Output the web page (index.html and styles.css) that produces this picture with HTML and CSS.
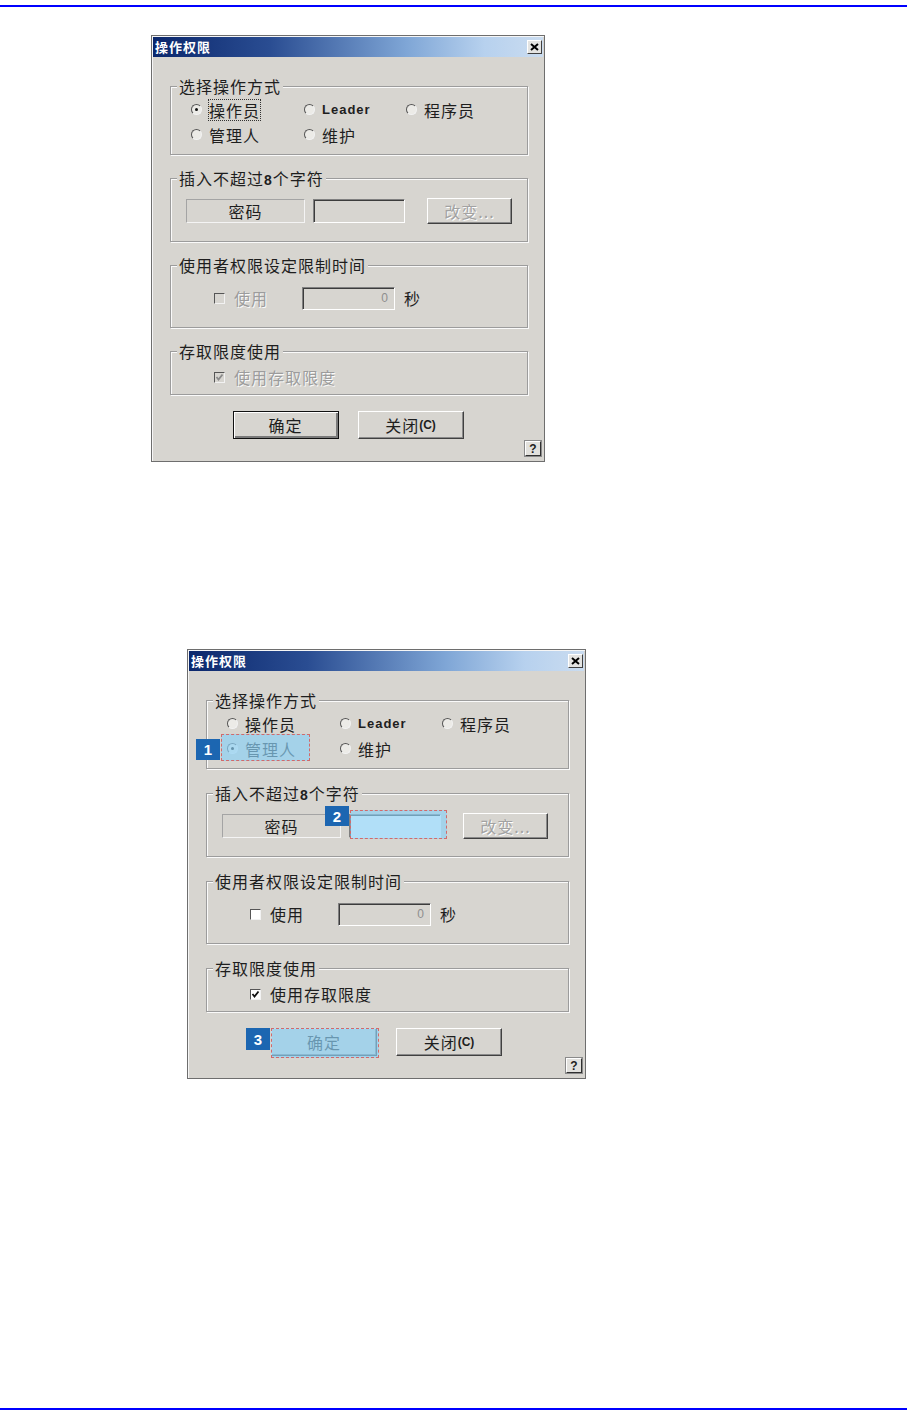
FILE: index.html
```html
<!DOCTYPE html>
<html lang="zh-CN">
<head>
  <meta charset="UTF-8">
  <meta name="viewport" content="width=device-width, initial-scale=1.0">
  <title>操作权限</title>
  <link rel="stylesheet" href="styles.css">
</head>
<body>
  <div class="rule"></div>

  <!-- plain dialog -->
  <div class="dialog">
    <div class="titlebar">
      <span class="title">操作权限</span>
      <span class="close"><svg width="9" height="8" viewBox="0 0 9 8"><path d="M1 1 L8 7 M8 1 L1 7" stroke="#000" stroke-width="2"/></svg></span>
    </div>
    <div class="dialog-body">
      <div class="groups">
        <fieldset class="group">
          <legend>选择操作方式</legend>
          <div class="radio-grid">
            <div class="opt checked"><span class="radio"></span><span class="focus">操作员</span></div>
            <div class="opt"><span class="radio"></span><span class="latin">Leader</span></div>
            <div class="opt"><span class="radio"></span>程序员</div>
            <div class="opt"><span class="radio"></span>管理人</div>
            <div class="opt"><span class="radio"></span>维护</div>
          </div>
        </fieldset>

        <fieldset class="group">
          <legend>插入不超过<b class="num">8</b>个字符</legend>
          <div class="row row-pass">
            <div class="static">密码</div>
            <div class="field field-pass"></div>
            <div class="btn btn-change disabled">改变...</div>
          </div>
        </fieldset>

        <fieldset class="group">
          <legend>使用者权限设定限制时间</legend>
          <div class="row row-time">
            <div class="check-opt disabled"><span class="box"></span>使用</div>
            <div class="field field-num">0</div>
            <span class="unit">秒</span>
          </div>
        </fieldset>

        <fieldset class="group">
          <legend>存取限度使用</legend>
          <div class="row row-limit">
            <div class="check-opt disabled"><span class="box"><svg width="9" height="9" viewBox="0 0 9 9"><path d="M1.5 4 L3.5 6.5 L7.5 1.5" fill="none" stroke="currentColor" stroke-width="1.8"/></svg></span>使用存取限度</div>
          </div>
        </fieldset>
      </div>

      <div class="actions">
        <div class="btn btn-default">确定</div>
        <div class="btn">关闭<b class="key">(C)</b></div>
      </div>
      <div class="help-row"><span class="help">?</span></div>
    </div>
  </div>

  <!-- same dialog with the numbered steps -->
  <div class="dialog dialog-steps">
    <div class="titlebar">
      <span class="title">操作权限</span>
      <span class="close"><svg width="9" height="8" viewBox="0 0 9 8"><path d="M1 1 L8 7 M8 1 L1 7" stroke="#000" stroke-width="2"/></svg></span>
    </div>
    <div class="dialog-body">
      <div class="groups">
        <fieldset class="group">
          <legend>选择操作方式</legend>
          <div class="radio-grid">
            <div class="opt"><span class="radio"></span>操作员</div>
            <div class="opt"><span class="radio"></span><span class="latin">Leader</span></div>
            <div class="opt"><span class="radio"></span>程序员</div>
            <div class="opt checked">
              <span class="radio"></span>管理人
              <span class="mark mark-1"></span>
              <span class="badge badge-1">1</span>
            </div>
            <div class="opt"><span class="radio"></span>维护</div>
          </div>
        </fieldset>

        <fieldset class="group">
          <legend>插入不超过<b class="num">8</b>个字符</legend>
          <div class="row row-pass">
            <div class="static">密码</div>
            <div class="field field-pass field-on">
              <span class="mark mark-2"></span>
              <span class="badge badge-2">2</span>
            </div>
            <div class="btn btn-change disabled">改变...</div>
          </div>
        </fieldset>

        <fieldset class="group">
          <legend>使用者权限设定限制时间</legend>
          <div class="row row-time">
            <div class="check-opt"><span class="box"></span>使用</div>
            <div class="field field-num">0</div>
            <span class="unit">秒</span>
          </div>
        </fieldset>

        <fieldset class="group">
          <legend>存取限度使用</legend>
          <div class="row row-limit">
            <div class="check-opt"><span class="box"><svg width="9" height="9" viewBox="0 0 9 9"><path d="M1.5 4 L3.5 6.5 L7.5 1.5" fill="none" stroke="currentColor" stroke-width="1.8"/></svg></span>使用存取限度</div>
          </div>
        </fieldset>
      </div>

      <div class="actions">
        <div class="btn">
          确定
          <span class="mark mark-3"></span>
          <span class="badge badge-3">3</span>
        </div>
        <div class="btn">关闭<b class="key">(C)</b></div>
      </div>
      <div class="help-row"><span class="help">?</span></div>
    </div>
  </div>

  <div class="rule rule-bottom"></div>
</body>
</html>
```

FILE: styles.css
```css
body {
  margin: 0;
  background: #fff;
  font-family: "Noto Sans CJK SC", "Liberation Sans", sans-serif;
  color: #1e1e1e;
}
.rule {
  height: 2px;
  margin-top: 5px;
  background: #0000ff;
}
.rule-bottom {
  margin-top: 329px;
}

/* dialog frame */
.dialog {
  width: 394px;
  margin: 28px 0 0 151px;
  box-sizing: border-box;
  border: 1px solid #6e6e6e;
  padding: 1px;
  background: #d7d5d0;
  box-shadow: inset 1px 1px 0 #f6f6f6;
}
.dialog-steps {
  width: 399px;
  margin: 187px 0 0 187px;
}
.titlebar {
  height: 20px;
  display: flex;
  align-items: center;
  justify-content: space-between;
  padding: 0 1px 0 2px;
  background: linear-gradient(to right, #0b276c 0%, #2a4d92 30%, #7fa6d6 65%, #b7d1ee 85%, #cadcf0 100%);
}
.title {
  color: #fff;
  font-size: 13px;
  font-weight: bold;
  letter-spacing: 1px;
  line-height: 20px;
}
.close {
  width: 15px;
  height: 14px;
  box-sizing: border-box;
  display: flex;
  align-items: center;
  justify-content: center;
  background: #e4e4e2;
  border: 1px solid;
  border-color: #fff #404040 #404040 #fff;
}

.dialog-body {
  padding: 20px 0 4px 0;
}
.groups {
  padding: 0 15px 0 17px;
}

/* group boxes */
.group {
  margin: 0;
  padding: 0;
  min-width: 0;
  border: 1px solid #9c9c9c;
  box-shadow: inset 1px 1px 0 #fafafa, 1px 1px 0 #fafafa;
}
.group + .group {
  margin-top: 14px;
}
.dialog-steps .group + .group {
  margin-top: 15px;
}
legend {
  margin-left: 6px;
  padding: 0 2px;
  font-size: 16px;
  line-height: 18px;
  letter-spacing: 1px;
  background: #d7d5d0;
}
.num {
  font-family: "Liberation Sans", sans-serif;
  font-size: 14px;
  line-height: 14px;
}

/* radio options */
.radio-grid {
  display: grid;
  grid-template-columns: 113px 102px 1fr;
  grid-auto-rows: 25px;
  padding: 2px 0 7px 20px;
}
.opt {
  position: relative;
  display: flex;
  align-items: center;
  font-size: 16px;
  letter-spacing: 1px;
  line-height: 20px;
}
.radio {
  position: relative;
  width: 11px;
  height: 11px;
  box-sizing: border-box;
  margin-right: 7px;
  border-radius: 50%;
  border: 1px solid;
  border-color: #555 #f2f2f2 #f2f2f2 #555;
  background: #ecebe7;
}
.checked .radio::after {
  content: "";
  position: absolute;
  left: 3px;
  top: 3px;
  width: 3px;
  height: 3px;
  border-radius: 50%;
  background: #111;
}
.focus {
  outline: 1px dotted #333;
  outline-offset: 0;
}
.latin {
  font-family: "Liberation Sans", sans-serif;
  font-weight: bold;
  font-size: 13px;
}

/* rows inside groups */
.row {
  display: flex;
  align-items: center;
  font-size: 16px;
  letter-spacing: 1px;
}
.row-pass {
  height: 26px;
  padding: 11px 0 17px 15px;
}
.row-time {
  height: 24px;
  padding: 12px 0 17px 43px;
}
.row-limit {
  height: 22px;
  padding: 6px 0 6px 43px;
}
.static {
  width: 119px;
  height: 24px;
  box-sizing: border-box;
  display: flex;
  align-items: center;
  justify-content: center;
  border: 1px solid;
  border-color: #a4a4a4 #f4f4f4 #f4f4f4 #a4a4a4;
}
.field {
  position: relative;
  height: 24px;
  box-sizing: border-box;
  border: 1px solid;
  border-color: #808080 #fff #fff #808080;
  box-shadow: inset 1px 1px 0 #3c3c3c;
  background: #d7d5d0;
}
.field-pass {
  width: 92px;
  margin-left: 8px;
}
.field-on {
  background: #fff;
}
.field-num {
  width: 93px;
  height: 23px;
  padding-right: 5px;
  display: flex;
  align-items: center;
  justify-content: flex-end;
  font-family: "Liberation Sans", sans-serif;
  font-size: 12px;
  color: #8e8e8e;
}
.unit {
  margin-left: 9px;
}
.check-opt {
  width: 88px;
  display: flex;
  align-items: center;
  color: #1e1e1e;
}
.row-limit .check-opt {
  width: auto;
}
.box {
  width: 11px;
  height: 11px;
  box-sizing: border-box;
  margin-right: 9px;
  display: flex;
  align-items: center;
  justify-content: center;
  border: 1px solid;
  border-color: #555 #f2f2f2 #f2f2f2 #555;
  background: #fff;
  color: #111;
}
.check-opt.disabled {
  color: #9c9c9c;
  text-shadow: 1px 1px 0 #fafafa;
}
.check-opt.disabled .box {
  background: #d7d5d0;
  color: #8a8a8a;
}

/* push buttons */
.btn {
  position: relative;
  width: 106px;
  height: 28px;
  box-sizing: border-box;
  display: flex;
  align-items: center;
  justify-content: center;
  font-size: 16px;
  letter-spacing: 1px;
  background: #d7d5d0;
  border: 1px solid;
  border-color: #fff #404040 #404040 #fff;
  box-shadow: inset -1px -1px 0 #8a8a8a;
}
.btn-default {
  border-color: #111;
  box-shadow: inset 1px 1px 0 #fff, inset -2px -2px 0 #7a7a7a;
}
.btn-change {
  width: 85px;
  height: 26px;
  margin-left: 22px;
}
.btn.disabled {
  color: #a2a2a2;
  text-shadow: 1px 1px 0 #fff;
}
.key {
  font-family: "Liberation Sans", sans-serif;
  font-size: 12px;
  letter-spacing: 0;
}
.actions {
  display: flex;
  justify-content: center;
  gap: 19px;
  margin-top: 16px;
}
.help-row {
  display: flex;
  justify-content: flex-end;
  padding-right: 2px;
  margin-top: 2px;
}
.help {
  width: 16px;
  height: 15px;
  box-sizing: border-box;
  display: flex;
  align-items: center;
  justify-content: center;
  font-family: "Liberation Sans", sans-serif;
  font-size: 12px;
  font-weight: bold;
  background: #e2e1dd;
  border: 1px solid;
  border-color: #fff #303030 #303030 #fff;
  box-shadow: 0 0 0 1px #8a8a8a;
}

/* numbered step marks */
.mark {
  position: absolute;
  box-sizing: border-box;
  background: rgba(140, 208, 244, 0.68);
  border: 1px dashed #d26a6a;
}
.mark-1 {
  left: -6px;
  top: -2px;
  width: 89px;
  height: 27px;
}
.mark-2 {
  left: 0;
  top: -5px;
  width: 97px;
  height: 29px;
}
.mark-3 {
  left: -1px;
  top: -1px;
  width: 108px;
  height: 30px;
}
.badge {
  position: absolute;
  width: 24px;
  display: flex;
  align-items: center;
  justify-content: center;
  background: #1c66b1;
  color: #fff;
  font-family: "Liberation Sans", sans-serif;
  font-size: 15px;
  font-weight: bold;
  letter-spacing: 0;
}
.badge-1 {
  left: -31px;
  top: 3px;
  height: 21px;
}
.badge-2 {
  left: -25px;
  top: -9px;
  height: 20px;
}
.badge-3 {
  left: -26px;
  top: -1px;
  height: 22px;
}
```
